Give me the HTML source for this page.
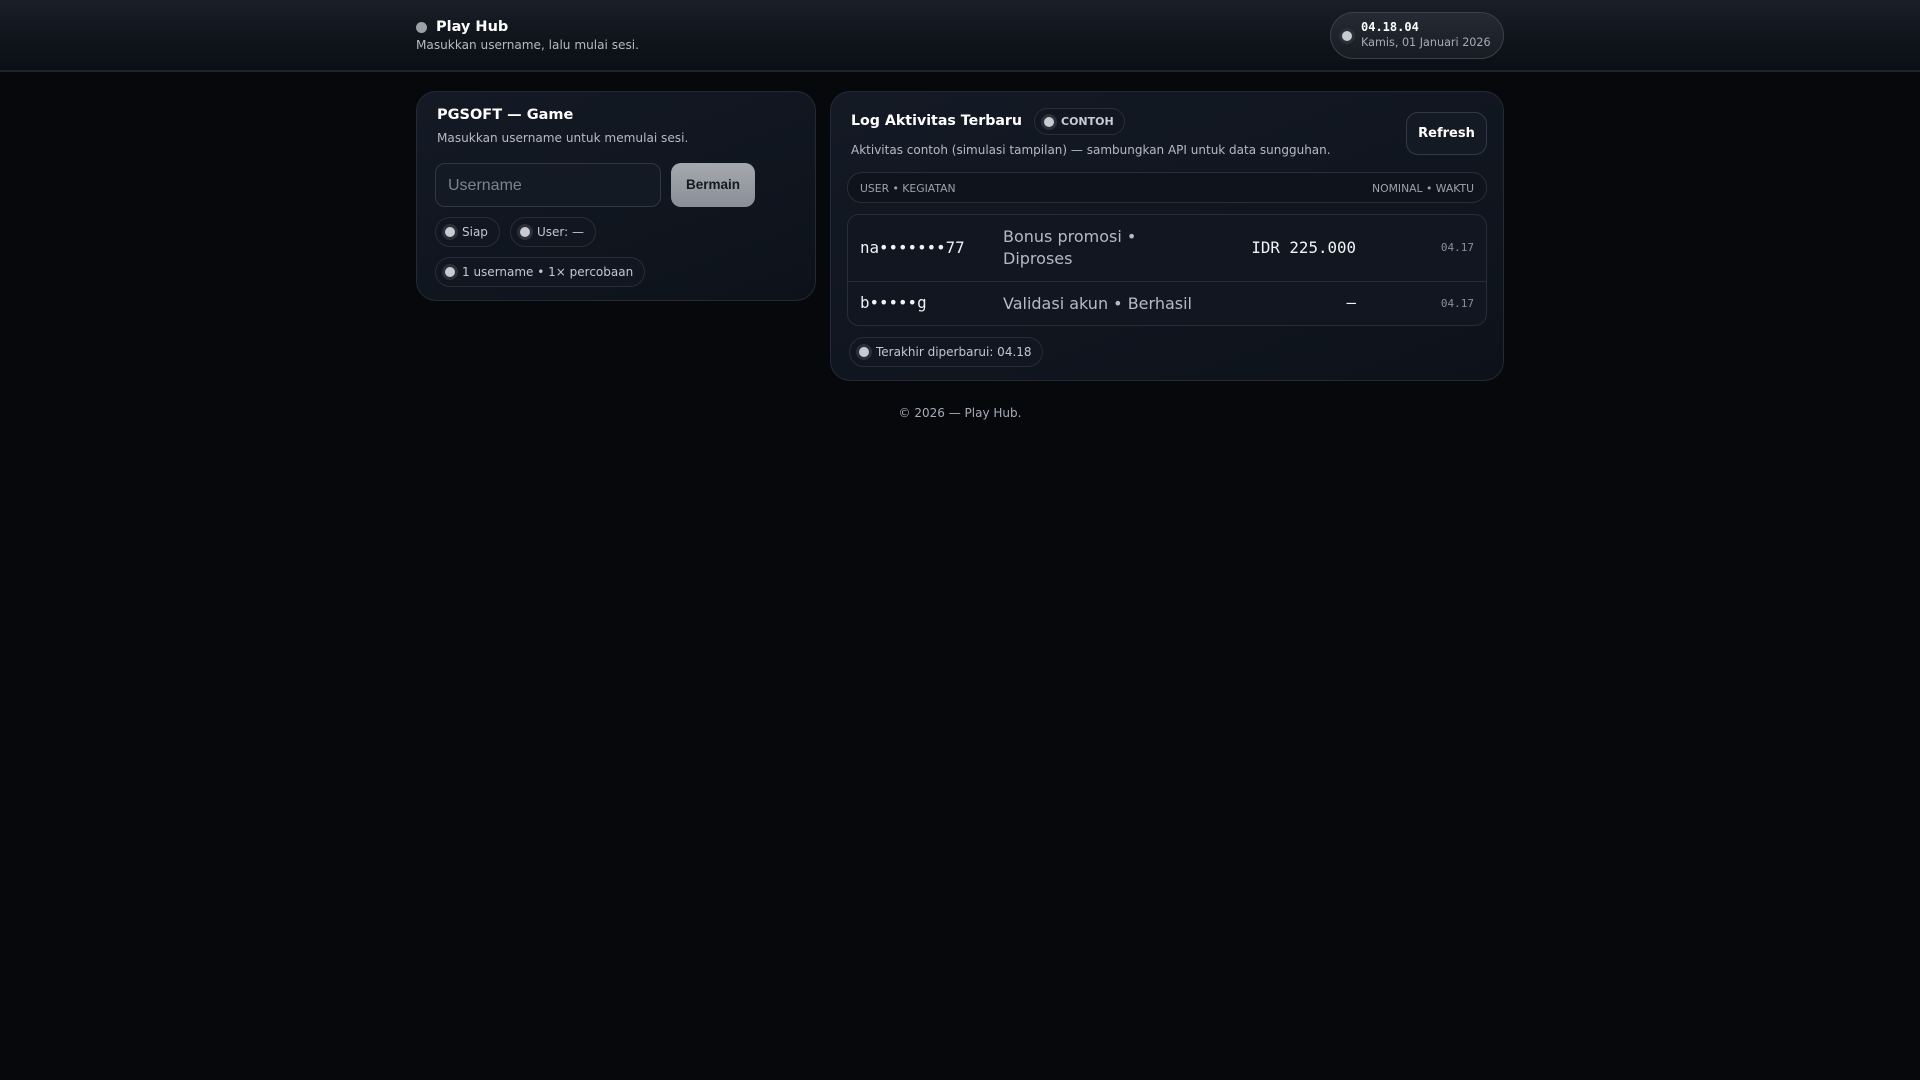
<!DOCTYPE html>
<html><head><meta charset="utf-8"><style>
*{box-sizing:border-box;margin:0;padding:0}
body{width:1920px;height:1080px;background:#06080c;font-family:"DejaVu Sans",sans-serif;color:#e8ebf0;position:relative;overflow:hidden}
.hdr{position:absolute;left:0;top:0;width:1920px;height:72px;background:linear-gradient(180deg,#1a1f28 0%,#0f131a 60%,#0c1016 100%);border-bottom:2px solid #1f2530}
.abs{position:absolute}
.dot{width:11px;height:11px;border-radius:50%;background:#c9cbd0;box-shadow:0 0 0 3px #2a2f39}
.card{position:absolute;background:linear-gradient(160deg,#141a25,#0d121a);border:1px solid #232a36;border-radius:20px}
.chip{position:absolute;height:30px;border:1px solid #272e3a;border-radius:15px;background:#111620;font-size:12px;color:#c2c7d0;display:flex;align-items:center;padding-left:9px}
.chip .dot{width:10px;height:10px;margin-right:7px}
.mono{font-family:"DejaVu Sans Mono",monospace}
</style></head><body>
<div class="hdr"></div>
<div class="abs dot" style="left:416px;top:22px;box-shadow:none;background:#9da0a6"></div>
<div class="abs" style="left:436px;top:19px;font-size:14.5px;font-weight:bold;color:#fff">Play Hub</div>
<div class="abs" style="left:416px;top:38px;font-size:12.1px;color:#b5bac3">Masukkan username, lalu mulai sesi.</div>
<div class="abs" style="left:1330px;top:12px;width:174px;height:47px;border:1px solid #3a404b;border-radius:24px;background:linear-gradient(180deg,#252a33,#181c24)"></div>
<div class="abs dot" style="left:1342px;top:31px;width:10px;height:10px"></div>
<div class="abs mono" style="left:1361px;top:20px;font-size:12px;font-weight:bold;color:#fff">04.18.04</div>
<div class="abs" style="left:1361px;top:36px;font-size:11.2px;color:#a6acb6">Kamis, 01 Januari 2026</div>

<div class="card" style="left:416px;top:91px;width:400px;height:210px"></div>
<div class="abs" style="left:437px;top:107px;font-size:14.5px;font-weight:bold;color:#fff">PGSOFT — Game</div>
<div class="abs" style="left:437px;top:131px;font-size:12.1px;color:#b5bac3">Masukkan username untuk memulai sesi.</div>
<div class="abs" style="left:435px;top:163px;width:226px;height:44px;border:1px solid #2f3744;border-radius:10px;background:#141a24;font-family:'Liberation Sans',sans-serif;font-size:16px;color:#7d848f;padding:13px 0 0 12px">Username</div>
<div class="abs" style="left:671px;top:163px;width:84px;height:44px;border-radius:10px;background:linear-gradient(180deg,#a5a8ae,#8a8e96);font-family:'Liberation Sans',sans-serif;font-weight:bold;font-size:13.5px;color:#141820;text-align:center;line-height:44px">Bermain</div>
<div class="chip" style="left:435px;top:217px;width:65px"><span class="dot"></span>Siap</div>
<div class="chip" style="left:510px;top:217px;width:86px"><span class="dot"></span>User: —</div>
<div class="chip" style="left:435px;top:257px;width:210px;font-size:12px"><span class="dot"></span>1 username • 1× percobaan</div>

<div class="card" style="left:830px;top:91px;width:674px;height:290px"></div>
<div class="abs" style="left:851px;top:113px;font-size:14.2px;font-weight:bold;color:#fff">Log Aktivitas Terbaru</div>
<div class="chip" style="left:1034px;top:108px;width:91px;height:27px;font-size:11px;font-weight:bold;color:#c8ccd4"><span class="dot"></span>CONTOH</div>
<div class="abs" style="left:1406px;top:112px;width:81px;height:43px;border:1px solid #323945;border-radius:12px;background:#141a24;font-weight:bold;font-size:13px;color:#fff;text-align:center;line-height:41px">Refresh</div>
<div class="abs" style="left:851px;top:143px;font-size:12px;color:#b5bac3">Aktivitas contoh (simulasi tampilan) — sambungkan API untuk data sungguhan.</div>
<div class="abs" style="left:847px;top:172px;width:640px;height:31px;border:1px solid #272e3a;border-radius:15px;background:#0f141c;font-size:10.8px;color:#9ca2ac">
<span class="abs" style="left:12px;top:9px">USER • KEGIATAN</span><span class="abs" style="right:12px;top:9px">NOMINAL • WAKTU</span></div>
<div class="abs" style="left:847px;top:214px;width:640px;height:112px;border:1px solid #272e3a;border-radius:12px;background:#111620">
<div class="abs" style="left:0;top:66px;width:638px;height:1px;background:#272e3a"></div>
<span class="abs mono" style="left:12px;top:23px;font-size:15.8px;color:#f0f2f5">na•••••••77</span>
<span class="abs" style="left:155px;top:11px;font-size:16px;line-height:22px;color:#b5bac3">Bonus promosi •<br>Diproses</span>
<span class="abs mono" style="right:130px;top:23px;font-size:15.8px;color:#f0f2f5">IDR 225.000</span>
<span class="abs mono" style="right:12px;top:26px;font-size:11px;color:#8a909a">04.17</span>
<span class="abs mono" style="left:12px;top:78px;font-size:15.8px;color:#f0f2f5">b•••••g</span>
<span class="abs" style="left:155px;top:79px;font-size:16px;color:#b5bac3">Validasi akun • Berhasil</span>
<span class="abs mono" style="right:130px;top:78px;font-size:15.8px;color:#f0f2f5">—</span>
<span class="abs mono" style="right:12px;top:82px;font-size:11px;color:#8a909a">04.17</span>
</div>
<div class="chip" style="left:849px;top:337px;width:194px;font-size:12px"><span class="dot"></span>Terakhir diperbarui: 04.18</div>
<div class="abs" style="left:0;width:1920px;top:406px;text-align:center;font-size:12px;color:#a6acb6">© 2026 — Play Hub.</div>
</body></html>
